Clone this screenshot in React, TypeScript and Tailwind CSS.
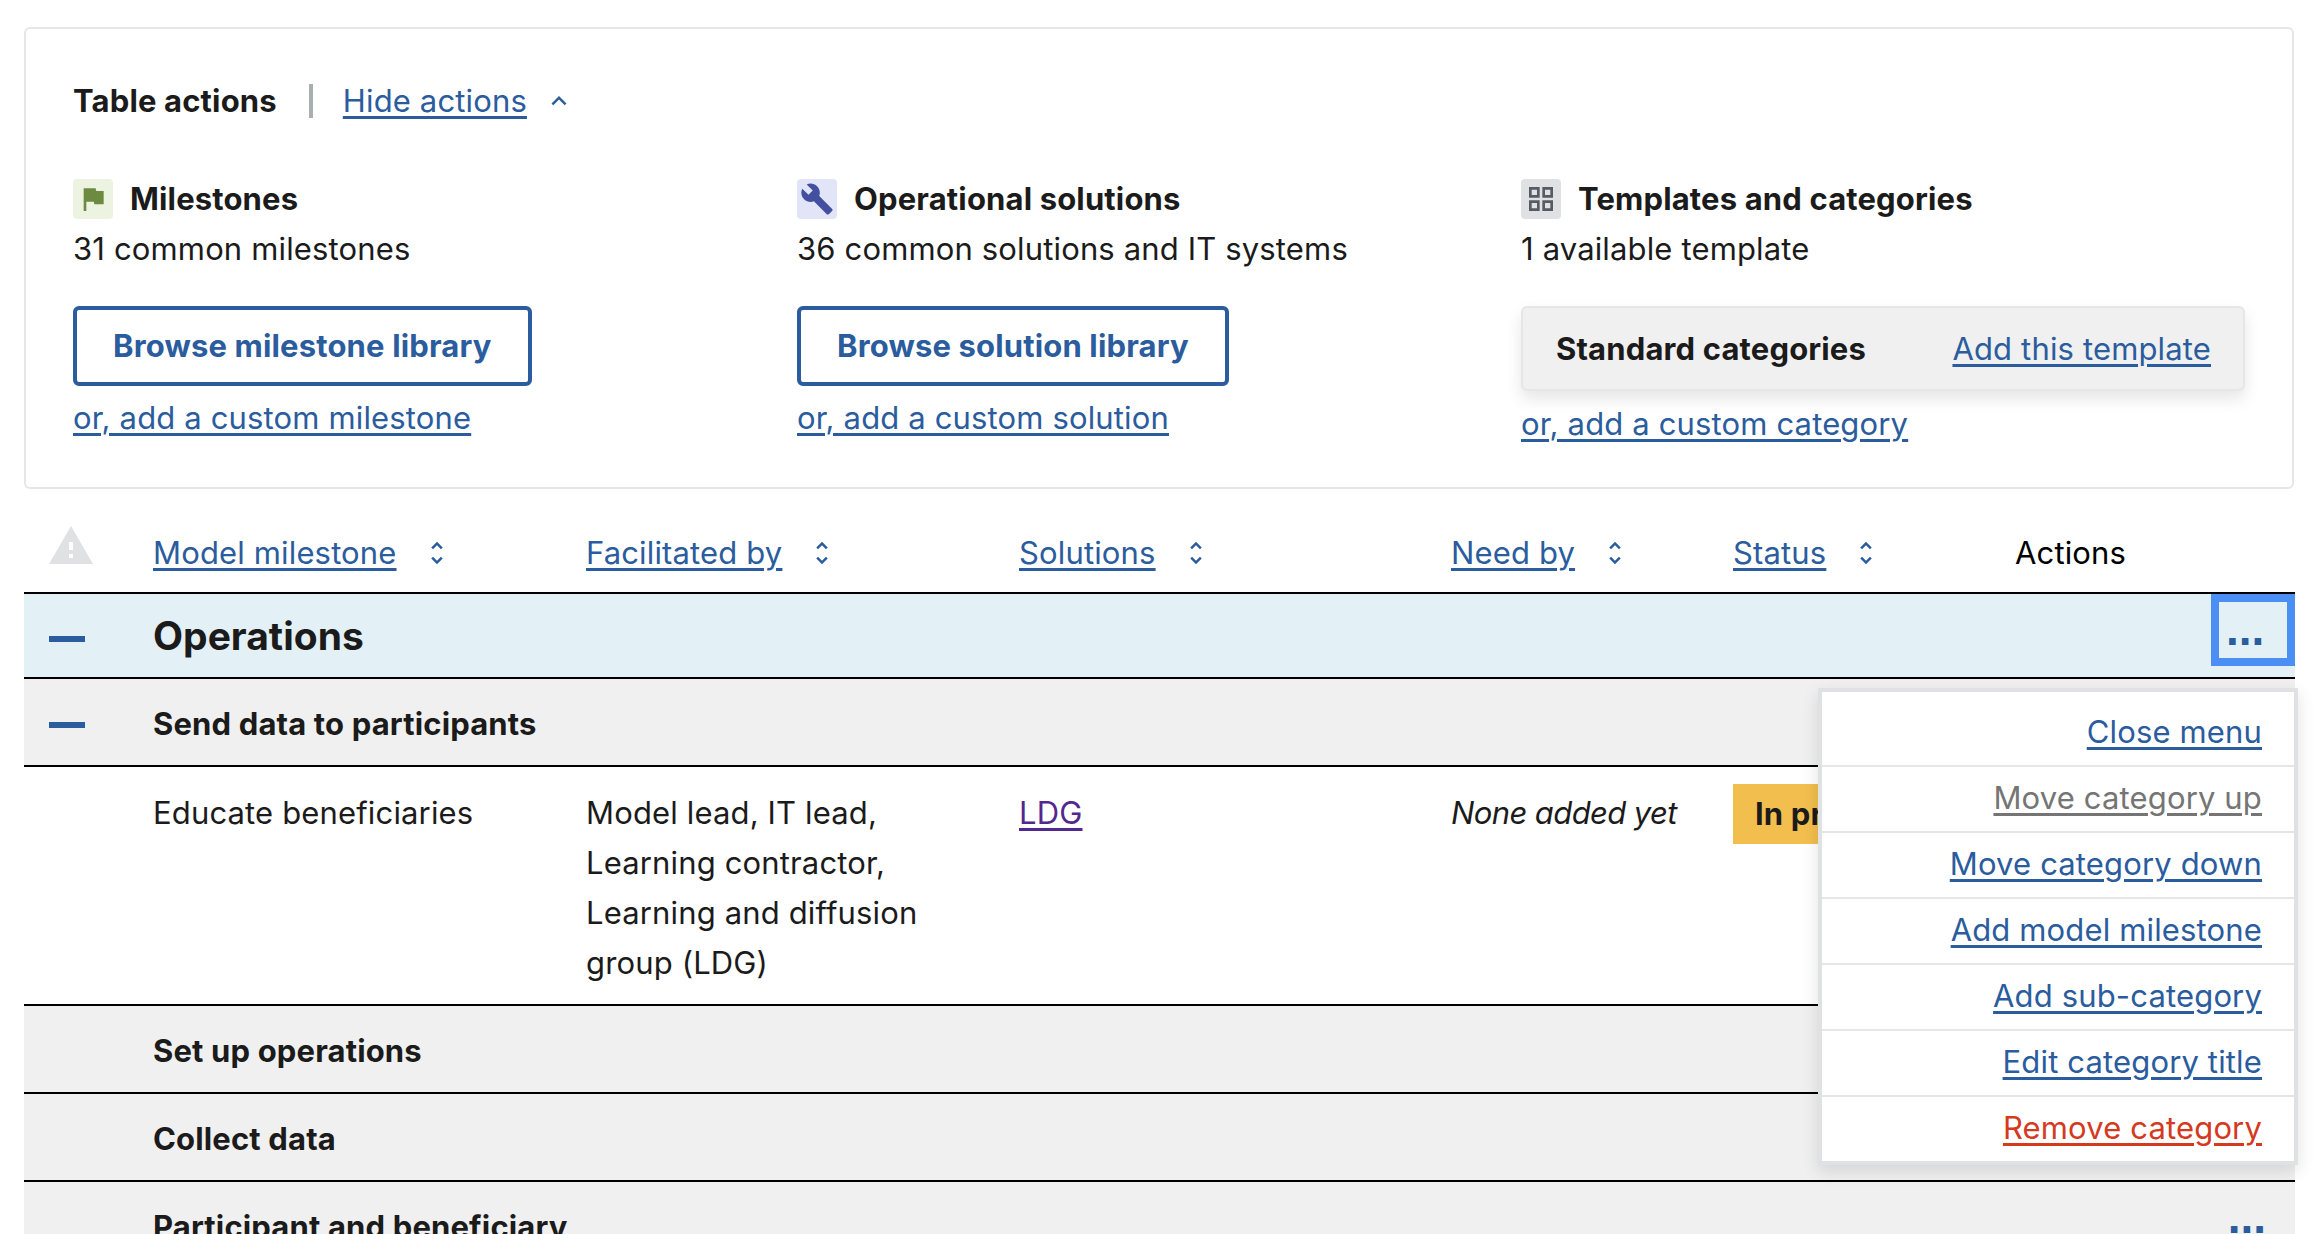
import type { ReactNode } from 'react';
import { MdBuild, MdExpandLess, MdFlag, MdOutlineGridView, MdUnfoldMore, MdWarning } from 'react-icons/md';

const gridCols = 'grid grid-cols-[129px_433px_433px_432px_282px_282px_280px]';
const linkClass = 'text-[#2a5c9e] underline decoration-[3px] underline-offset-[4px]';

function TextLink({ children, className = '' }: { children: ReactNode; className?: string }) {
  return <a className={`${linkClass} ${className}`}>{children}</a>;
}

function SortableHeader({ label }: { label: string }) {
  return (
    <div className="flex items-center">
      <TextLink>{label}</TextLink>
      <MdUnfoldMore size={30} className="ml-[25px] text-[#2a5c9e]" />
    </div>
  );
}

function Dots() {
  return (
    <span className="font-['Liberation_Sans',sans-serif] text-[46px] leading-[50px] font-bold tracking-normal text-[#2a5c9e]">...</span>
  );
}

function Minus() {
  return <span className="mt-[6px] ml-[25px] block h-[6px] w-[36px] bg-[#2a5c9e]" />;
}

function CategoryRow({ title, open, dots }: { title: string; open?: boolean; dots?: boolean }) {
  return (
    <div className={`${gridCols} h-[88px] items-center border-b-2 border-black bg-[#f0f0f0]`}>
      <div>{open && <Minus />}</div>
      <div className="col-span-5 pt-[3px] font-bold text-[#1b1b1b]">{title}</div>
      <div className="flex justify-end self-start pt-[10px] pr-[29px]">{dots && <Dots />}</div>
    </div>
  );
}

function ActionColumn({
  icon,
  iconBox,
  title,
  subtitle,
  children,
}: {
  icon: ReactNode;
  iconBox: string;
  title: string;
  subtitle: string;
  children: ReactNode;
}) {
  return (
    <div>
      <div className="flex h-[50px] items-center gap-[17px]">
        <span className={`flex h-[40px] w-[40px] items-center justify-center rounded-[4px] ${iconBox}`}>{icon}</span>
        <span className="font-bold">{title}</span>
      </div>
      <div className="h-[50px]">{subtitle}</div>
      <div className="mt-[32px]">{children}</div>
    </div>
  );
}

function BrowseButton({ label }: { label: string }) {
  return (
    <button className="h-[80px] rounded-[6px] border-4 border-[#2a5c9e] px-[36px] font-bold text-[#2a5c9e]">
      {label}
    </button>
  );
}

const menuItems = ['Move category up', 'Move category down', 'Add model milestone', 'Add sub-category', 'Edit category title', 'Remove category'];

function ActionsMenu() {
  return (
    <div className="absolute top-[94px] right-[-3px] z-10 w-[480px] border-4 border-[#dfe1e2] bg-white pt-[7px] shadow-[0_6px_16px_rgba(0,0,0,0.12)]">
      <div className="flex h-[66px] items-center justify-end pr-[32px]">
        <TextLink>Close menu</TextLink>
      </div>
      {menuItems.map((item, i) => (
        <div key={item} className="flex h-[66px] items-center justify-end border-t-2 border-[#e6e6e6] pr-[32px] pb-[2px]">
          <a
            className={`underline decoration-[3px] underline-offset-[4px] ${
              i === 0 ? 'text-[#757575]' : i === 5 ? 'text-[#d5391e]' : 'text-[#2a5c9e]'
            }`}
          >
            {item}
          </a>
        </div>
      ))}
    </div>
  );
}

export default function App() {
  return (
    <div className="h-[1234px] overflow-hidden bg-white pt-[27px] pl-[24px] font-['Inter',sans-serif] text-[31px] leading-[50px] tracking-[0.15px] text-[#1b1b1b]">
      <section className="w-[2270px] rounded-[6px] border-2 border-[#e6e6e6] px-[47px] pt-[47px] pb-[38px]">
        <div className="flex h-[50px] items-center">
          <span className="font-bold">Table actions</span>
          <span className="mr-[30px] ml-[32px] h-[34px] w-[4px] bg-[#a9aeb1]" />
          <TextLink>Hide actions</TextLink>
          <MdExpandLess size={30} className="ml-[17px] text-[#2a5c9e]" />
        </div>
        <div className="mt-[48px] grid grid-cols-[724px_724px_724px]">
          <ActionColumn
            icon={<MdFlag size={32} className="text-[#6c8a40]" />}
            iconBox="bg-[#ecf3e0]"
            title="Milestones"
            subtitle="31 common milestones"
          >
            <BrowseButton label="Browse milestone library" />
            <div className="mt-[7px]">
              <TextLink>or, add a custom milestone</TextLink>
            </div>
          </ActionColumn>
          <ActionColumn
            icon={<MdBuild size={34} className="text-[#42509f]" />}
            iconBox="bg-[#e2e5f7]"
            title="Operational solutions"
            subtitle="36 common solutions and IT systems"
          >
            <BrowseButton label="Browse solution library" />
            <div className="mt-[7px]">
              <TextLink>or, add a custom solution</TextLink>
            </div>
          </ActionColumn>
          <ActionColumn
            icon={<MdOutlineGridView size={32} className="text-[#565c65]" />}
            iconBox="bg-[#dfe1e2]"
            title="Templates and categories"
            subtitle="1 available template"
          >
            <div className="flex h-[85px] w-[724px] items-center justify-between rounded-[6px] border-2 border-[#e6e6e6] bg-[#f0f0f0] pr-[32px] pl-[33px] shadow-[0_8px_16px_rgba(0,0,0,0.1)]">
              <span className="font-bold">Standard categories</span>
              <TextLink>Add this template</TextLink>
            </div>
            <div className="mt-[8px]">
              <TextLink>or, add a custom category</TextLink>
            </div>
          </ActionColumn>
        </div>
      </section>

      <div className="w-[2271px]">
        <div className={`${gridCols} h-[105px] items-end border-b-2 border-black pb-[14px]`}>
          <div className="self-end pb-[8px] pl-[23px]">
            <MdWarning size={48} className="text-[#dfe1e2]" />
          </div>
          <SortableHeader label="Model milestone" />
          <SortableHeader label="Facilitated by" />
          <SortableHeader label="Solutions" />
          <SortableHeader label="Need by" />
          <SortableHeader label="Status" />
          <div className="text-black">Actions</div>
        </div>

        <div className={`${gridCols} relative h-[85px] border-b-2 border-black bg-[#e3f0f6]`}>
          <div className="flex items-center">
            <Minus />
          </div>
          <div className="col-span-5 flex items-center text-[39px] font-bold tracking-normal">Operations</div>
          <div className="flex justify-end">
            <button className="flex h-[72px] w-[84px] justify-start border-8 border-[#4b8ff5] pt-[2px] pl-[7px]">
              <Dots />
            </button>
          </div>
          <ActionsMenu />
        </div>

        <CategoryRow title="Send data to participants" open />

        <div className={`${gridCols} h-[239px] border-b-2 border-black pt-[21px]`}>
          <div />
          <div>Educate beneficiaries</div>
          <div className="w-[370px]">Model lead, IT lead, Learning contractor, Learning and diffusion group (LDG)</div>
          <div>
            <a className="text-[#54278f] underline decoration-[3px] underline-offset-[4px]">LDG</a>
          </div>
          <div className="italic tracking-[-0.6px]">None added yet</div>
          <div>
            <span className="-mt-[4px] block h-[60px] w-[220px] bg-[#f2bf4f] pl-[22px] leading-[60px] font-bold whitespace-nowrap">In progress</span>
          </div>
          <div />
        </div>

        <CategoryRow title="Set up operations" />
        <CategoryRow title="Collect data" />
        <CategoryRow title="Participant and beneficiary" dots />
      </div>
    </div>
  );
}
